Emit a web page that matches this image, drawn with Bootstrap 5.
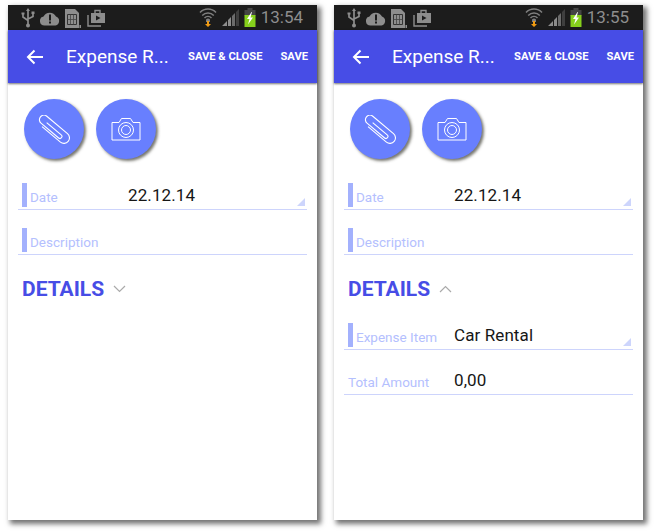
<!DOCTYPE html>
<html lang="en"><head><meta charset="utf-8"><title>Expense Report</title>
<link rel="stylesheet" href="https://cdn.jsdelivr.net/npm/bootstrap@5.3.0/dist/css/bootstrap.min.css">
<style>
html,body{height:100%}
body{width:662px;height:531px;overflow:hidden;background:#fff;font-family:Roboto,"Liberation Sans",sans-serif;padding:5px 0 0 8px}
.shots{gap:17px}
.phone{width:309px;height:515px;background:#fff;box-shadow:3px 3px 5px 1px rgba(0,0,0,.55);}
.sbar{height:25px;background:#1c1c1c;color:#8d8d8d;padding:0 14px 0 12px}
.sbar svg{display:block;flex:none}
.ic-cloud{margin-left:4px}
.ic-sim{margin-left:4px}
.ic-cam{margin-left:6px}
.ic-sig{margin-left:5px}
.ic-bat{margin-left:4px}
.clock{font-size:17px;line-height:25px;color:#8e8e8e;margin-left:5px}
.abar{height:53px;background:#474de6;color:#fff;box-shadow:0 1px 2px rgba(0,0,0,.55);padding:0 9px 0 18px}
.abar-title{font-size:19px;margin-left:22px;padding-top:2px;white-space:nowrap}
.abar-act{font-size:11.2px;font-weight:700;white-space:nowrap;color:#fff;padding-top:2px}
.abar-act2{margin-left:18px}
.fabs{padding:16px 0 0 16px;gap:12px}
.fab-btn{width:60px;height:60px;border-radius:50%;background:#687ffe;box-shadow:2px 2px 3px rgba(60,60,50,.7)}
.fields{margin-top:6px}
.fld{height:45px;margin:0 10px;border-bottom:1px solid #cdd4fc;position:relative;padding-left:12px}
.fld-mark{position:absolute;left:4px;top:18px;width:5px;height:24px;background:#a3b1fd}
.fld-label{width:98px;font-size:13.5px;color:#b4c0fe;padding-top:24px;line-height:16px;flex:none;white-space:nowrap}
.fld-label-plain{margin-left:-8px;width:106px}
.fld-val{font-size:17px;color:#161616;padding-top:20px;line-height:20px;letter-spacing:.1px}
.fld-tri{position:absolute;right:2px;bottom:3px;width:0;height:0;border-left:8px solid transparent;border-bottom:8px solid #cdd5fc}
.sect{margin:19px 0 0 14px;height:30px;gap:9px}
.sect-name{font-size:21px;font-weight:700;color:#474de6;line-height:30px}
.extra{margin-top:1px}
</style></head>
<body>
<svg class="d-none">
 <symbol id="i-usb" viewBox="0 0 16 20"><g fill="none" stroke="#8d8d8d" stroke-width="1.700"><path d="M8 2v16M3 6v3l5 3.500M13 5v3.500L8 11"/></g><path d="M8 0l2 3H6zM1.500 4.500h3v2h-3zM11.500 3.500h3v2.500h-3z" fill="#8d8d8d"/><circle cx="8" cy="17.500" r="2" fill="#8d8d8d"/></symbol>
 <symbol id="i-cloud" viewBox="0 0 20 16"><path d="M4.500 15.500A4.500 4.500 0 0 1 3.500 6.600 7 7 0 0 1 16 6.500 4.700 4.700 0 0 1 15.500 15.500z" fill="#8d8d8d"/><path d="M9 4.500h2v6H9zM9 11.500h2v2H9z" fill="#1c1c1c"/></symbol>
 <symbol id="i-sim" viewBox="0 0 17 20"><path d="M1 1h10l4 4v15H1z" fill="#8d8d8d"/><path d="M3.500 6.500h9v10h-9z" fill="none" stroke="#333" stroke-width="1"/><path d="M6.500 6.500v10M9.500 6.500v10M3.500 11.500h9" stroke="#444" stroke-width=".8"/><path d="M15.500 17h1.500v3h-1.500z" fill="#8d8d8d"/></symbol>
 <symbol id="i-cam" viewBox="0 0 18 18"><path d="M1 6v11h13" fill="none" stroke="#8d8d8d" stroke-width="1.400"/><path d="M4 4h14v10H4z" fill="#8d8d8d"/><path d="M8 4V1.500h5V4" fill="none" stroke="#8d8d8d" stroke-width="1.400"/><path d="M9 6.500l4.500 2.500L9 11.500z" fill="#1c1c1c"/></symbol>
 <symbol id="i-wifi" viewBox="0 0 18 19"><g fill="none" stroke="#7f7f7f" stroke-width="1.500"><path d="M1 4.500a11 11 0 0 1 16 0M3.200 7.500a8 8 0 0 1 11.600 0M5.500 10a5 5 0 0 1 7 0"/></g><path d="M7 11.500a3 3 0 0 1 4 0L11 14H7z" fill="#7f7f7f"/><path d="M8 13h2v3h2l-3 3-3-3h2z" fill="#f09a12"/></symbol>
 <symbol id="i-sig" viewBox="0 0 18 17"><path d="M0 17L5 12v5zM6 11l3-3v9H6z" fill="#8d8d8d"/><path d="M10 7l3-3v13h-3z" fill="#6c6c6c"/><path d="M14 3l3-3v17h-3z" fill="#3f3f3f"/></symbol>
 <symbol id="i-bat" viewBox="0 0 12 20"><path d="M3.500 0h5v2h3v6H.5V2h3z" fill="#444"/><path d="M.5 7h11v12H.5z" fill="#86d01c"/><path d="M7.500 4L3 11h2.500L4 16.500 9 9.500H6.500L8 4z" fill="#fff"/></symbol>
 <symbol id="i-clip" viewBox="-16 -14.500 32 29"><path transform="rotate(40)" d="M-11 5.500H13a5.500 5.500 0 0 0 0-11H-14a4.500 4.500 0 0 0 0 9H9a2 2 0 0 0 0-4H-10" fill="none" stroke="#fff" stroke-width="1.100"/></symbol>
 <symbol id="i-photo" viewBox="0 0 30 24"><path d="M1 5.500h7l2.500-4h9l2.500 4h7v17.500H1z" fill="none" stroke="#fff" stroke-width="1"/><circle cx="15" cy="13" r="7.500" fill="none" stroke="#fff" stroke-width="1"/><circle cx="15" cy="13" r="4.500" fill="none" stroke="#fff" stroke-width="1"/></symbol>
</svg>
<div class="d-flex shots">

<div class="phone">
 <div class="sbar d-flex align-items-center">
  <svg width="16" height="20"><use href="#i-usb"/></svg>
  <svg class="ic-cloud" width="20" height="16"><use href="#i-cloud"/></svg>
  <svg class="ic-sim" width="17" height="20"><use href="#i-sim"/></svg>
  <svg class="ic-cam" width="18" height="18"><use href="#i-cam"/></svg>
  <svg class="ms-auto" width="18" height="19"><use href="#i-wifi"/></svg>
  <svg class="ic-sig" width="18" height="17"><use href="#i-sig"/></svg>
  <svg class="ic-bat" width="12" height="20"><use href="#i-bat"/></svg>
  <span class="clock">13:54</span>
 </div>
 <div class="abar d-flex align-items-center">
  <svg width="18" height="16" viewBox="0 0 18 16"><path d="M17 8H2M8.500 1.500L2 8l6.500 6.500" fill="none" stroke="#fff" stroke-width="2"/></svg>
  <span class="abar-title">Expense R...</span>
  <span class="abar-act ms-auto">SAVE &amp; CLOSE</span>
  <span class="abar-act abar-act2">SAVE</span>
 </div>
 <div class="fabs d-flex">
  <div class="fab-btn d-flex align-items-center justify-content-center"><svg width="32" height="29"><use href="#i-clip"/></svg></div>
  <div class="fab-btn d-flex align-items-center justify-content-center"><svg width="30" height="24"><use href="#i-photo"/></svg></div>
 </div>
 <div class="fields">
  <div class="fld d-flex"><i class="fld-mark"></i><div class="fld-label">Date</div><div class="fld-val">22.12.14</div><i class="fld-tri"></i></div>
  <div class="fld d-flex"><i class="fld-mark"></i><div class="fld-label">Description</div></div>
 </div>
 <div class="sect d-flex align-items-center"><span class="sect-name">DETAILS</span><svg width="13" height="8" viewBox="0 0 13 8"><path d="M1 1l5.500 5.500L12 1" fill="none" stroke="#aaa" stroke-width="1.200"/></svg></div>
</div>

<div class="phone">
 <div class="sbar d-flex align-items-center">
  <svg width="16" height="20"><use href="#i-usb"/></svg>
  <svg class="ic-cloud" width="20" height="16"><use href="#i-cloud"/></svg>
  <svg class="ic-sim" width="17" height="20"><use href="#i-sim"/></svg>
  <svg class="ic-cam" width="18" height="18"><use href="#i-cam"/></svg>
  <svg class="ms-auto" width="18" height="19"><use href="#i-wifi"/></svg>
  <svg class="ic-sig" width="18" height="17"><use href="#i-sig"/></svg>
  <svg class="ic-bat" width="12" height="20"><use href="#i-bat"/></svg>
  <span class="clock">13:55</span>
 </div>
 <div class="abar d-flex align-items-center">
  <svg width="18" height="16" viewBox="0 0 18 16"><path d="M17 8H2M8.500 1.500L2 8l6.500 6.500" fill="none" stroke="#fff" stroke-width="2"/></svg>
  <span class="abar-title">Expense R...</span>
  <span class="abar-act ms-auto">SAVE &amp; CLOSE</span>
  <span class="abar-act abar-act2">SAVE</span>
 </div>
 <div class="fabs d-flex">
  <div class="fab-btn d-flex align-items-center justify-content-center"><svg width="32" height="29"><use href="#i-clip"/></svg></div>
  <div class="fab-btn d-flex align-items-center justify-content-center"><svg width="30" height="24"><use href="#i-photo"/></svg></div>
 </div>
 <div class="fields">
  <div class="fld d-flex"><i class="fld-mark"></i><div class="fld-label">Date</div><div class="fld-val">22.12.14</div><i class="fld-tri"></i></div>
  <div class="fld d-flex"><i class="fld-mark"></i><div class="fld-label">Description</div></div>
 </div>
 <div class="sect d-flex align-items-center"><span class="sect-name">DETAILS</span><svg width="13" height="8" viewBox="0 0 13 8"><path d="M1 7l5.500-5.500L12 7" fill="none" stroke="#aaa" stroke-width="1.200"/></svg></div>
 <div class="extra">
  <div class="fld d-flex"><i class="fld-mark"></i><div class="fld-label">Expense Item</div><div class="fld-val">Car Rental</div><i class="fld-tri"></i></div>
  <div class="fld d-flex"><div class="fld-label fld-label-plain">Total Amount</div><div class="fld-val">0,00</div></div>
 </div>
</div>

</div>
<script src="https://cdn.jsdelivr.net/npm/bootstrap@5.3.0/dist/js/bootstrap.bundle.min.js"></script>
</body></html>
